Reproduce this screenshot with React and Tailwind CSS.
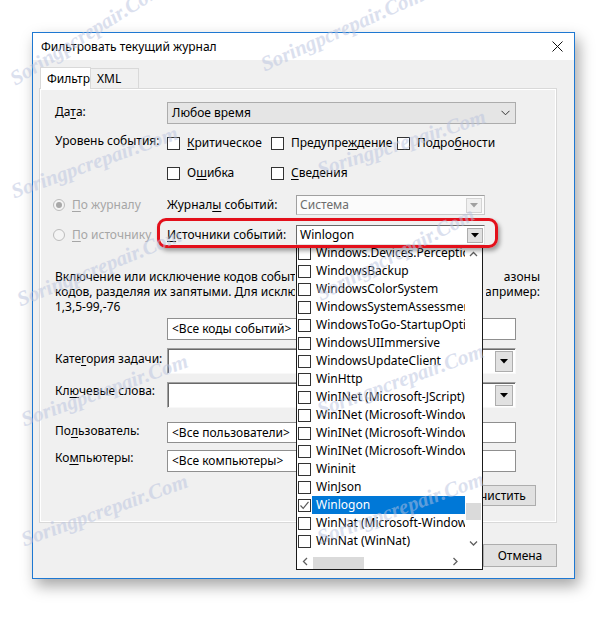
import React from "react";

function U({ a = "", u, b = "" }) {
  return (
    <span className="whitespace-nowrap">
      {a}
      <span className="underline underline-offset-2">{u}</span>
      {b}
    </span>
  );
}

function Box({ checked }) {
  return (
    <span className="w-[13px] h-[13px] border border-[#333333] bg-white shrink-0 flex items-center justify-center">
      {checked && (
        <svg width="11" height="11" viewBox="0 0 11 11">
          <path d="M1.5 5.5 L4.2 8.3 L9.5 1.8" fill="none" stroke="#5a5a5a" strokeWidth="1.2" />
        </svg>
      )}
    </span>
  );
}

function Check({ children, w }) {
  return (
    <div className={"flex items-center gap-[7px] " + (w || "")}>
      <Box />
      <span>{children}</span>
    </div>
  );
}

function Tri({ color = "#000" }) {
  return (
    <svg width="8" height="5" viewBox="0 0 8 5">
      <path d="M0 0 H8 L4 4.5 Z" fill={color} />
    </svg>
  );
}

function Chev({ dir }) {
  const d = {
    up: "M1 5 L4.5 1.5 L8 5",
    down: "M1 1.5 L4.5 5 L8 1.5",
    left: "M5 1 L1.5 4.5 L5 8",
    right: "M1.5 1 L5 4.5 L1.5 8",
  }[dir];
  const vert = dir === "up" || dir === "down";
  return (
    <svg width={vert ? 9 : 7} height={vert ? 7 : 9} viewBox={vert ? "0 0 9 7" : "0 0 7 9"}>
      <path d={d} fill="none" stroke="#606060" strokeWidth="1.3" />
    </svg>
  );
}

const items = [
  "Windows.Devices.Perception",
  "WindowsBackup",
  "WindowsColorSystem",
  "WindowsSystemAssessmentTests",
  "WindowsToGo-StartupOptions",
  "WindowsUIImmersive",
  "WindowsUpdateClient",
  "WinHttp",
  "WinINet (Microsoft-JScript)",
  "WinINet (Microsoft-Windows-WinINet)",
  "WinINet (Microsoft-Windows-WinINet-Capture)",
  "WinINet (Microsoft-Windows-WinINet-Config)",
  "Wininit",
  "WinJson",
  "Winlogon",
  "WinNat (Microsoft-Windows-WinNat)",
  "WinNat (WinNat)",
];

const marks = [
  { l: 12, t: 70, r: -32 },
  { l: 262, t: 55, r: -24 },
  { l: 12, t: 182, r: -20 },
  { l: 318, t: 160, r: -18 },
  { l: 18, t: 290, r: -22 },
  { l: 318, t: 285, r: -28 },
  { l: 22, t: 410, r: -20 },
  { l: 318, t: 400, r: -20 },
  { l: 22, t: 530, r: -20 },
  { l: 318, t: 528, r: -20 },
];

export default function App() {
  return (
    <div className="relative w-[607px] h-[617px] overflow-hidden bg-white font-['Noto_Sans',sans-serif] text-[12px] leading-none text-black">
      <div className="pt-[32px] pl-[32px]">
        <div className="w-[543px] h-[547px] border border-[#1e78d2] bg-[#f0f0f0] shadow-[4px_7px_14px_rgba(0,0,0,0.35)] flex flex-col">
          {/* title bar */}
          <div className="h-[27px] bg-white flex items-center justify-between pl-[8px] pr-[11px] shrink-0">
            <span className="text-[12px]">Фильтровать текущий журнал</span>
            <svg width="11" height="11" viewBox="0 0 11 11">
              <path d="M0.5 0.5 L10.5 10.5 M10.5 0.5 L0.5 10.5" stroke="#111" strokeWidth="1" />
            </svg>
          </div>
          {/* body */}
          <div className="pl-[6px] pr-[17px] pt-[7px] flex flex-col">
            <div className="flex items-end h-[21px] pl-[1px]">
              <div className="relative z-10 -mb-px w-[51px] h-[22px] bg-white border border-[#d9d9d9] border-b-0 flex items-center pl-[6px]">
                Фильтр
              </div>
              <div className="w-[48px] h-[20px] border border-[#d9d9d9] border-l-0 border-b-0 flex items-center pl-[6px]">
                XML
              </div>
            </div>
            <div className="h-[435px] border border-[#d9d9d9] shadow-[inset_1px_1px_0_#ffffff,inset_-1px_-1px_0_#ffffff] flex flex-col">
              {/* Date */}
              <div className="mt-[13px] h-[22px] flex items-center pl-[15px]">
                <div className="w-[112px] -mt-[3px]">
                  <U a="Да" u="т" b="а:" />
                </div>
                <div className="w-[349px] h-[22px] bg-[#e5e5e5] border border-[#acacac] flex items-center justify-between pl-[4px] pr-[5px]">
                  <span>Любое время</span>
                  <svg width="9" height="6" viewBox="0 0 9 6">
                    <path d="M0.5 0.8 L4.5 4.8 L8.5 0.8" fill="none" stroke="#333" strokeWidth="1" />
                  </svg>
                </div>
              </div>
              {/* level row 1 */}
              <div className="mt-[10px] h-[18px] flex items-center pl-[15px]">
                <div className="w-[112px] -mt-[4px]">Уровень события:</div>
                <Check w="w-[104px]">
                  <U u="К" b="ритическое" />
                </Check>
                <Check w="w-[126px]">
                  <U a="Предупре" u="ж" b="дение" />
                </Check>
                <Check>
                  <U a="Подро" u="б" b="ности" />
                </Check>
              </div>
              {/* level row 2 */}
              <div className="mt-[12px] h-[18px] flex items-center pl-[127px]">
                <Check w="w-[104px]">
                  <U a="О" u="ш" b="ибка" />
                </Check>
                <Check>
                  <U u="С" b="ведения" />
                </Check>
              </div>
              {/* by log */}
              <div className="mt-[13px] h-[20px] flex items-center">
                <div className="w-[127px] pl-[13px] flex items-center gap-[7px] text-[#a6a6a6]">
                  <span className="w-[12px] h-[12px] rounded-full border border-[#bcbcbc] bg-[#f4f4f4] flex items-center justify-center">
                    <span className="w-[6px] h-[6px] rounded-full bg-[#a8a8a8]" />
                  </span>
                  <U u="П" b="о журналу" />
                </div>
                <div className="w-[129px]">
                  <U a="Журнал" u="ы" b=" событий:" />
                </div>
                <div className="w-[189px] h-[20px] border border-[#c8c8c8] border-t-[#a0a0a0] border-l-[#a0a0a0] bg-[#fbfbfb] flex items-center justify-between pl-[3px] pr-[2px]">
                  <span className="text-[#6d6d6d]">Система</span>
                  <span className="w-[16px] h-[15px] bg-[#f0f0f0] border border-[#d4d4d4] flex items-center justify-center">
                    <Tri color="#a0a0a0" />
                  </span>
                </div>
              </div>
              {/* by source */}
              <div className="mt-[10px] h-[20px] flex items-center">
                <div className="w-[127px] pl-[13px] flex items-center gap-[7px] text-[#a6a6a6]">
                  <span className="w-[12px] h-[12px] rounded-full border border-[#bcbcbc] bg-[#f4f4f4]" />
                  <U u="П" b="о источнику" />
                </div>
                <div className="w-[129px]">
                  <U u="И" b="сточники событий:" />
                </div>
                <div className="w-[189px] h-[20px] border border-[#e3e3e3] border-t-[#696969] border-l-[#696969] bg-white flex items-center justify-between pl-[3px] pr-[1px]">
                  <span>Winlogon</span>
                  <span className="w-[16px] h-[15px] bg-[#e1e1e1] border border-[#adadad] flex items-center justify-center">
                    <Tri />
                  </span>
                </div>
              </div>
              {/* info text (middle part lies under the open list) */}
              <div className="mt-[24px] pl-[15px] pr-[16px] leading-[15px]">
                <div className="flex justify-between whitespace-nowrap">
                  <span className="w-[240px] overflow-hidden">Включение или исключение кодов событий:</span>
                  <span className="w-[52px] overflow-hidden flex justify-end">азоны</span>
                </div>
                <div className="flex justify-between whitespace-nowrap">
                  <span className="w-[240px] overflow-hidden">кодов, разделяя их запятыми. Для исключения</span>
                  <span className="w-[54px] overflow-hidden flex justify-end">Например:</span>
                </div>
                <div>1,3,5-99,-76</div>
              </div>
              {/* event codes */}
              <div className="mt-[4px] h-[22px] pl-[127px]">
                <div className="w-[349px] h-[22px] bg-white border border-[#8f8f8f] flex items-center pl-[4px]">
                  &lt;Все коды событий&gt;
                </div>
              </div>
              {/* task category */}
              <div className="mt-[8px] h-[26px] flex pl-[15px]">
                <div className="w-[112px] pt-[5px]">
                  <U a="Кате" u="г" b="ория задачи:" />
                </div>
                <div className="w-[349px] h-[26px] border border-[#f8f8f8] border-t-[#a0a0a0] border-l-[#a0a0a0] shadow-[inset_1px_1px_0_#696969] bg-white flex items-center justify-end pr-[2px]">
                  <span className="w-[18px] h-[21px] bg-[#e1e1e1] border border-[#adadad] flex items-center justify-center">
                    <Tri />
                  </span>
                </div>
              </div>
              {/* keywords */}
              <div className="mt-[8px] h-[26px] flex pl-[15px]">
                <div className="w-[112px] pt-[3px]">
                  <U a="Кл" u="ю" b="чевые слова:" />
                </div>
                <div className="w-[349px] h-[26px] border border-[#f8f8f8] border-t-[#a0a0a0] border-l-[#a0a0a0] shadow-[inset_1px_1px_0_#696969] bg-white flex items-center justify-end pr-[2px]">
                  <span className="w-[18px] h-[21px] bg-[#e1e1e1] border border-[#adadad] flex items-center justify-center">
                    <Tri />
                  </span>
                </div>
              </div>
              {/* user */}
              <div className="mt-[14px] h-[21px] flex items-center pl-[15px]">
                <div className="w-[112px] -mt-[4px]">
                  <U a="По" u="л" b="ьзователь:" />
                </div>
                <div className="w-[349px] h-[21px] bg-white border border-[#8f8f8f] flex items-center pl-[4px]">
                  &lt;Все пользователи&gt;
                </div>
              </div>
              {/* computers */}
              <div className="mt-[7px] h-[22px] flex items-center pl-[15px]">
                <div className="w-[112px] -mt-[6px]">
                  <U a="Ко" u="м" b="пьютеры:" />
                </div>
                <div className="w-[349px] h-[22px] bg-white border border-[#8f8f8f] flex items-center pl-[4px]">
                  &lt;Все компьютеры&gt;
                </div>
              </div>
              {/* clear */}
              <div className="mt-[13px] flex justify-end pr-[20px]">
                <div className="w-[75px] h-[21px] bg-[#e1e1e1] border border-[#adadad] flex items-center justify-center">
                  Очистить
                </div>
              </div>
            </div>
            {/* bottom buttons */}
            <div className="mt-[21px] flex justify-end gap-[8px]">
              <div className="w-[74px] h-[23px] bg-[#e1e1e1] border border-[#adadad] flex items-center justify-center">
                ОК
              </div>
              <div className="w-[74px] h-[23px] bg-[#e1e1e1] border border-[#adadad] flex items-center justify-center">
                Отмена
              </div>
            </div>
          </div>
        </div>
      </div>

      {/* dropdown list */}
      <div className="absolute left-[296px] top-[245px] w-[187px] h-[325px] border border-[#1a1a1a] bg-white flex flex-col">
        <div className="flex h-[307px]">
          <div className="w-[168px] overflow-hidden">
            <div className="-mt-[2px]">
              {items.map((t) => {
                const sel = t === "Winlogon";
                return (
                  <div key={t} className="h-[18px] flex items-center">
                    <span className="ml-[1px]">
                      <Box checked={sel} />
                    </span>
                    <span
                      className={
                        "ml-[1px] h-[18px] flex-1 flex items-center pl-[4px] whitespace-nowrap overflow-hidden " +
                        (sel ? "bg-[#0078d7] text-white" : "")
                      }
                    >
                      {t}
                    </span>
                  </div>
                );
              })}
            </div>
          </div>
          <div className="w-[17px] flex flex-col items-center">
            <div className="mt-[5px]">
              <Chev dir="up" />
            </div>
            <div className="mt-[245px] w-[15px] h-[17px] bg-[#dadada]" />
            <div className="mt-[20px]">
              <Chev dir="down" />
            </div>
          </div>
        </div>
        <div className="flex h-[16px] items-center">
          <div className="w-[168px] flex items-center pl-[5px]">
            <Chev dir="left" />
            <div className="ml-[4px] w-[51px] h-[12px] mt-[3px] bg-[#dadada]" />
            <div className="ml-[88px]">
              <Chev dir="right" />
            </div>
          </div>
        </div>
      </div>

      {/* red highlight */}
      <div className="absolute left-[157px] top-[218px] w-[341px] h-[30px] rounded-[9px] border-[3px] border-[#e3101b] shadow-[2px_3px_4px_rgba(0,0,0,0.35)]" />

      {/* watermarks */}
      {marks.map((m, i) => (
        <div
          key={i}
          className="absolute pointer-events-none font-['Liberation_Serif',serif] italic font-bold text-[21px] text-[#b9c3df] opacity-50 whitespace-nowrap origin-left"
          style={{ left: m.l, top: m.t, transform: `rotate(${m.r}deg)` }}
        >
          Soringpcrepair.Com
        </div>
      ))}
    </div>
  );
}
